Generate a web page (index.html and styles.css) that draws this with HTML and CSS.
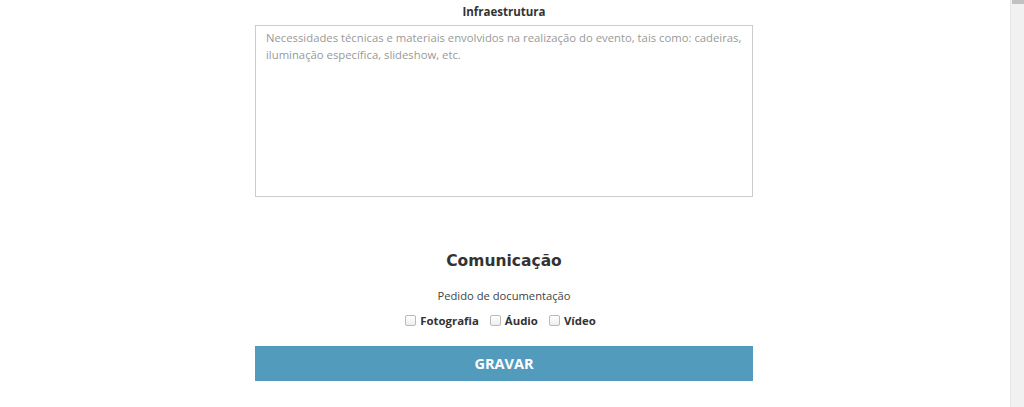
FILE: index.html
```html
<!DOCTYPE html>
<html lang="pt">
<head>
<meta charset="utf-8">
<link rel="stylesheet" href="styles.css">
</head>
<body>
<div class="page">
  <form class="form">
    <label class="field-label" for="infra">Infraestrutura</label>
    <textarea id="infra" class="textarea" placeholder="Necessidades técnicas e materiais envolvidos na realização do evento, tais como: cadeiras, iluminação específica, slideshow, etc."></textarea>

    <h2 class="section-title">Comunicação</h2>
    <p class="sub">Pedido de documentação</p>
    <div class="checks">
      <label class="check"><span class="box"></span>Fotografia</label>
      <label class="check"><span class="box"></span>Áudio</label>
      <label class="check"><span class="box"></span>Vídeo</label>
    </div>
    <button type="button" class="btn">GRAVAR</button>
  </form>
</div>
<div class="scrollbar"><div class="thumb"></div></div>
</body>
</html>
```

FILE: styles.css
```css
html, body {
  margin: 0;
  padding: 0;
  background: #fff;
  overflow: hidden;
}
body {
  width: 1024px;
  height: 407px;
  font-family: "Open Sans", "Liberation Sans", sans-serif;
  color: #333;
}
.page {
  width: 1011px;
  height: 407px;
}
.form {
  width: 498px;
  margin-left: 255px;
  display: flex;
  flex-direction: column;
  align-items: stretch;
}
.field-label {
  display: block;
  text-align: center;
  font-size: 11.5px;
  font-weight: 700;
  line-height: 17px;
  margin-top: 3px;
  height: 22px;
  color: #333;
}
.textarea {
  box-sizing: border-box;
  width: 498px;
  height: 172px;
  border: 1px solid #ccc;
  padding: 3px 10px;
  font-family: "Open Sans", "Liberation Sans", sans-serif;
  font-size: 11.3px;
  line-height: 17px;
  resize: none;
  margin: 0;
  color: #333;
}
.textarea::placeholder {
  color: #999;
}
.section-title {
  margin: 52px 0 0;
  text-align: center;
  font-family: "DejaVu Sans", sans-serif;
  font-weight: 700;
  font-size: 15.5px;
  line-height: 24px;
  color: #333;
}
.sub {
  margin: 14px 0 0;
  text-align: center;
  font-size: 11.2px;
  line-height: 17px;
  color: #444;
}
.checks {
  display: flex;
  justify-content: center;
  gap: 11px;
  margin-top: 7px;
  padding-right: 7px;
  height: 18px;
}
.check {
  display: flex;
  align-items: center;
  font-size: 11.4px;
  font-weight: 700;
  color: #333;
}
.box {
  width: 9px;
  height: 9px;
  border: 1px solid #bbb;
  border-radius: 2px;
  background: linear-gradient(#fff, #eee);
  margin-right: 4px;
}
.btn {
  margin-top: 17px;
  height: 35px;
  border: none;
  background: #529bbd;
  color: #fff;
  font-family: "Open Sans", "Liberation Sans", sans-serif;
  font-weight: 700;
  font-size: 14.5px;
  padding: 0;
}
.scrollbar {
  position: absolute;
  top: 0;
  right: 0;
  width: 13px;
  height: 407px;
  background: #f1f1f1;
  border-left: 1px solid #e6e6e6;
}
.thumb {
  margin-left: 1px;
  height: 4px;
  background: #c1c1c1;
}
```
